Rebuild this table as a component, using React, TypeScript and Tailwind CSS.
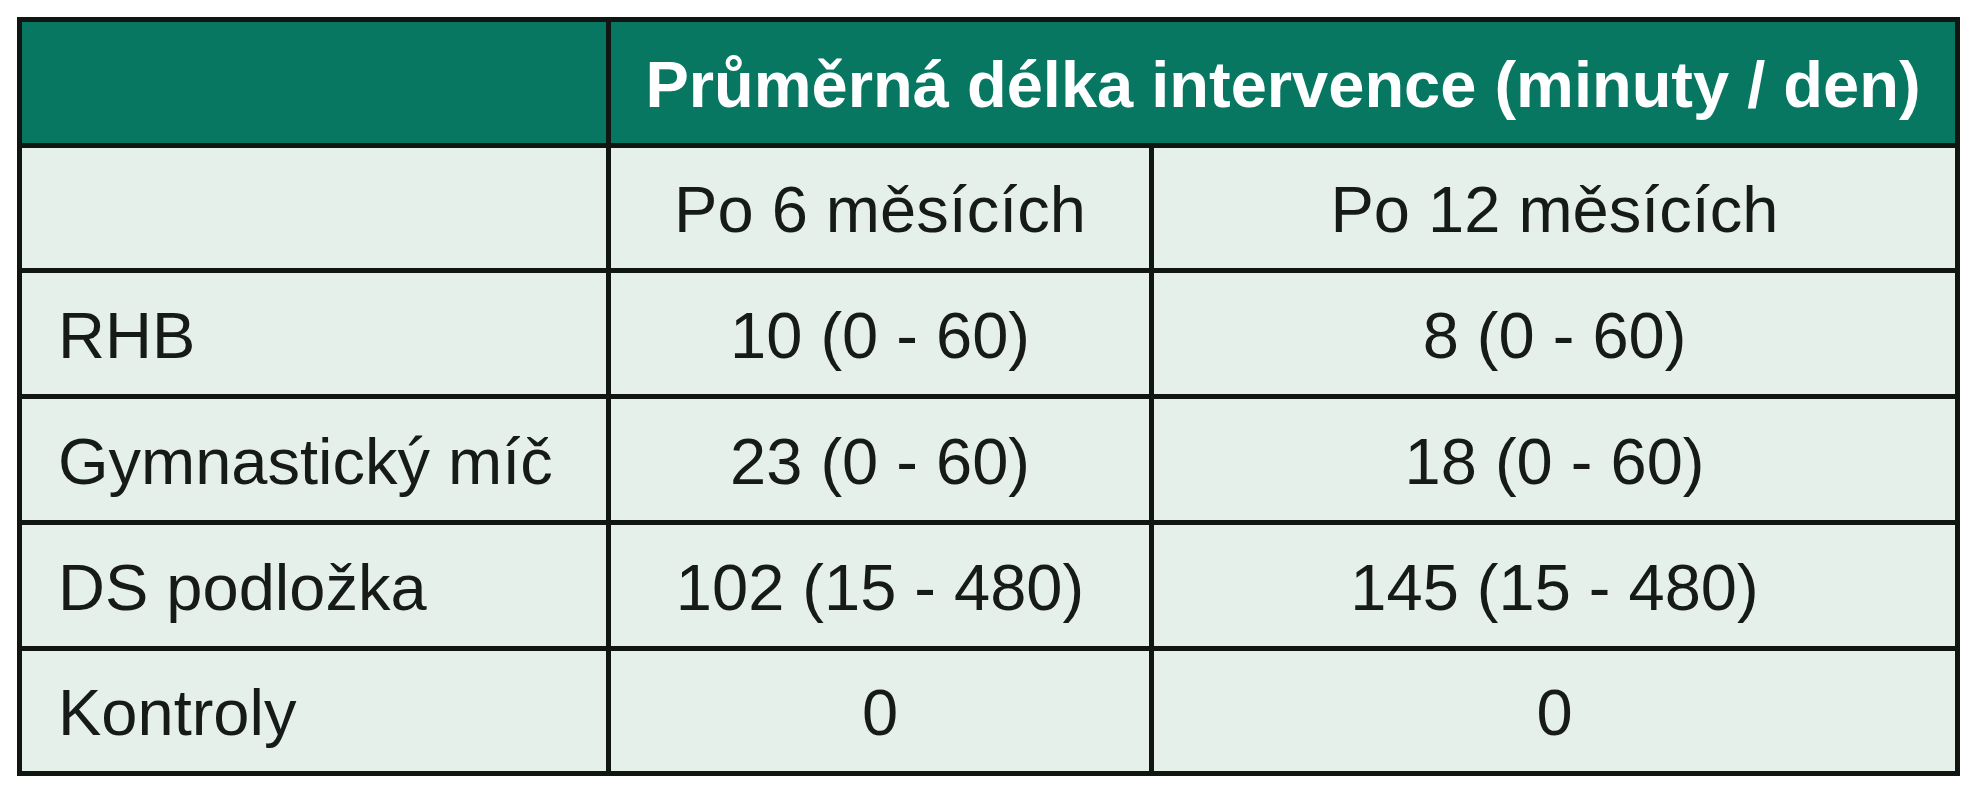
const rows = [
  { label: 'RHB', six: '10 (0 - 60)', twelve: '8 (0 - 60)' },
  { label: 'Gymnastický míč', six: '23 (0 - 60)', twelve: '18 (0 - 60)' },
  { label: 'DS podložka', six: '102 (15 - 480)', twelve: '145 (15 - 480)' },
  { label: 'Kontroly', six: '0', twelve: '0' },
]

export default function App() {
  return (
    <div className="min-h-screen bg-white p-[17px] font-['Liberation_Sans',Arial,sans-serif]">
      <div className="grid w-[1943px] grid-cols-[584px_538px_801px] grid-rows-[121px_120px_121px_121px_121px_120px] gap-[5px] bg-[#111613] p-[5px] text-[65px] leading-none text-[#161a18]">
        <div className="bg-[#087762]" />
        <div className="col-span-2 flex items-center justify-center bg-[#087762] pt-[3px] font-bold text-white">
          Průměrná délka intervence (minuty / den)
        </div>

        <div className="bg-[#e5f0eb]" />
        <div className="flex items-center justify-center bg-[#e5f0eb] pt-[3px]">Po 6 měsících</div>
        <div className="flex items-center justify-center bg-[#e5f0eb] pt-[3px]">Po 12 měsících</div>

        {rows.map((r) => (
          <Row key={r.label} {...r} />
        ))}
      </div>
    </div>
  )
}

function Row({ label, six, twelve }: { label: string; six: string; twelve: string }) {
  return (
    <>
      <div className="flex items-center bg-[#e5f0eb] pl-9 pt-[3px]">{label}</div>
      <div className="flex items-center justify-center bg-[#e5f0eb] pt-[3px]">{six}</div>
      <div className="flex items-center justify-center bg-[#e5f0eb] pt-[3px]">{twelve}</div>
    </>
  )
}
